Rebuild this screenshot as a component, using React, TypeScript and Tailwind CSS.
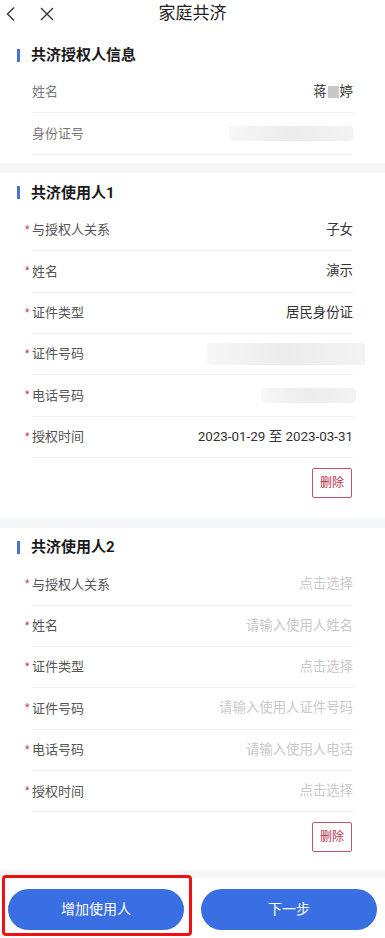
import React from "react";

const font = { fontFamily: 'Roboto, "Noto Sans CJK SC", "Noto Sans", sans-serif' };

function Blur({ w, h }: { w: number; h: number }) {
  return (
    <div
      className="rounded-sm bg-gradient-to-r from-[#f7f7f7] via-[#ececec] to-[#f3f3f3]"
      style={{ width: w, height: h }}
    />
  );
}

function Row({
  label,
  required,
  value,
  placeholder,
  custom,
  labelClass = "text-[#555]",
}: {
  label: string;
  required?: boolean;
  value?: string;
  placeholder?: string;
  custom?: React.ReactNode;
  labelClass?: string;
}) {
  return (
    <div className="relative mx-[32px] flex h-[41.4px] items-center justify-between border-b border-[#f0f0f0]">
      {required && (
        <span className="absolute left-[-7px] top-[15px] text-[10px] leading-none text-[#c2395a]">*</span>
      )}
      <span className={`text-[13px] ${labelClass}`}>{label}</span>
      {custom ? (
        custom
      ) : value ? (
        <span className="text-[13.4px] text-[#333]">{value}</span>
      ) : (
        <span className="text-[13.4px] text-[#c9c9c9]">{placeholder}</span>
      )}
    </div>
  );
}

function SectionTitle({ title }: { title: string }) {
  return (
    <div className="flex h-[34px] items-center pl-[17px]">
      <div className="h-[13px] w-[3px] bg-[#4a72cf]" />
      <span className="ml-[11px] text-[15px] font-bold text-[#1a1a1a]">{title}</span>
    </div>
  );
}

function DeleteBtn() {
  return (
    <div className="mx-[33px] mt-[10px] flex justify-end">
      <div className="flex h-[30px] w-[40px] items-center justify-center rounded-[2px] border border-[#c2536b] text-[12px] text-[#b8304f]">
        删除
      </div>
    </div>
  );
}

export default function App() {
  return (
    <div className="flex min-h-[938px] w-[385px] flex-col bg-white" style={font}>
      {/* nav */}
      <div className="relative flex h-[30px] items-center justify-center">
        <svg className="absolute left-[5px] top-[6px]" width="12" height="16" viewBox="0 0 12 16">
          <path d="M9 1.5 L2.5 8 L9 14.5" fill="none" stroke="#333" strokeWidth="1.4" />
        </svg>
        <svg className="absolute left-[39px] top-[6px]" width="16" height="16" viewBox="0 0 16 16">
          <path d="M2 2 L14 14 M14 2 L2 14" fill="none" stroke="#333" strokeWidth="1.4" />
        </svg>
        <span className="-mt-[2px] text-[17px] text-[#222]">家庭共济</span>
      </div>

      {/* section 1 */}
      <div className="pb-[8px] pt-[8px]">
        <SectionTitle title="共济授权人信息" />
        <Row
          label="姓名"
          labelClass="text-[#777]"
          custom={
            <span className="flex items-center text-[13.4px] text-[#333]">
              蒋<span className="mx-[1px] inline-block h-[12px] w-[11px] bg-[#c8c8c8]" />婷
            </span>
          }
        />
        <Row label="身份证号" labelClass="text-[#777]" custom={<Blur w={124} h={15} />} />
      </div>
      <div className="h-[10px] bg-[#f5f6f8]" />

      {/* section 2 */}
      <div className="pb-[20px] pt-[3px]">
        <SectionTitle title="共济使用人1" />
        <Row required label="与授权人关系" value="子女" />
        <Row required label="姓名" value="演示" />
        <Row required label="证件类型" value="居民身份证" />
        <Row
          required
          label="证件号码"
          custom={
            <div className="mr-[-12px]">
              <Blur w={158} h={22} />
            </div>
          }
        />
        <Row
          required
          label="电话号码"
          custom={
            <div className="mr-[-3px]">
              <Blur w={95} h={15} />
            </div>
          }
        />
        <Row required label="授权时间" value="2023-01-29 至 2023-03-31" />
        <DeleteBtn />
      </div>
      <div className="h-[10px] bg-[#f5f6f8]" />

      {/* section 3 */}
      <div className="pb-[18px] pt-[2px]">
        <SectionTitle title="共济使用人2" />
        <Row required label="与授权人关系" placeholder="点击选择" />
        <Row required label="姓名" placeholder="请输入使用人姓名" />
        <Row required label="证件类型" placeholder="点击选择" />
        <Row required label="证件号码" placeholder="请输入使用人证件号码" />
        <Row required label="电话号码" placeholder="请输入使用人电话" />
        <Row required label="授权时间" placeholder="点击选择" />
        <DeleteBtn />
      </div>
      <div className="h-[8px] bg-[#f5f6f8]" />

      {/* buttons */}
      <div className="flex gap-[17px] px-[8px] pb-[8px] pt-[11px]">
        <div className="relative flex-1">
          <div className="pointer-events-none absolute -bottom-[6px] -left-[6px] -right-[8px] -top-[14px] rounded-[4px] border-[3px] border-[#f01010]" />
          <div className="flex h-[41px] items-center justify-center rounded-full bg-[#3a6ee3] text-[14px] text-white">
            增加使用人
          </div>
        </div>
        <div className="flex h-[41px] flex-1 items-center justify-center rounded-full bg-[#3a6ee3] text-[14px] text-white">
          下一步
        </div>
      </div>
    </div>
  );
}
